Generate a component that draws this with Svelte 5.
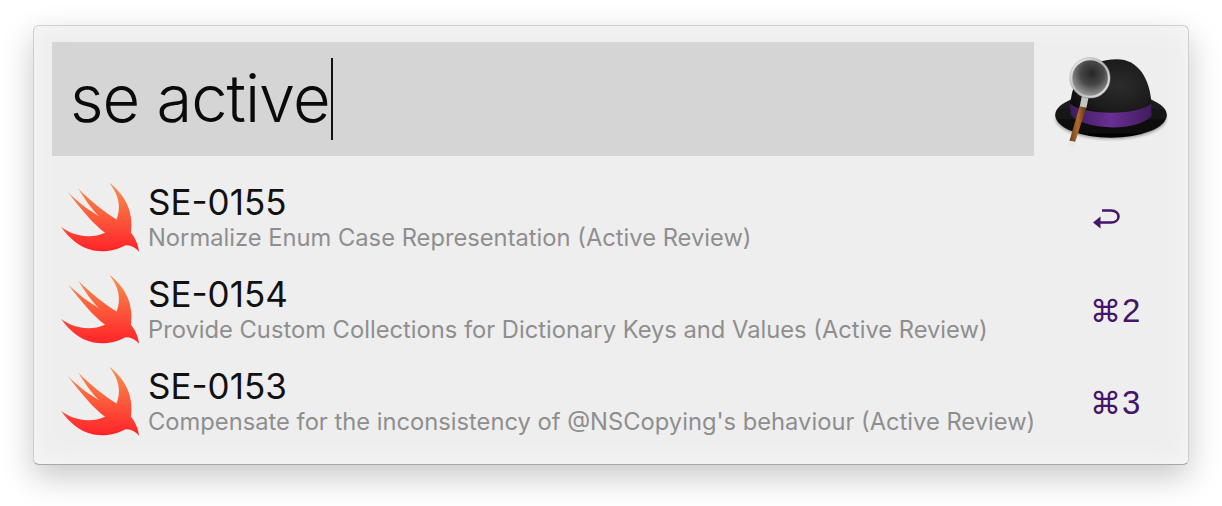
<script>
  const rows = [
    { id: 'SE-0155', sub: 'Normalize Enum Case Representation (Active Review)', key: '' },
    { id: 'SE-0154', sub: 'Provide Custom Collections for Dictionary Keys and Values (Active Review)', key: '2' },
    { id: 'SE-0153', sub: "Compensate for the inconsistency of @NSCopying's behaviour (Active Review)", key: '3' }
  ];
</script>

<div class="page">
  <div class="window">
    <div class="head">
      <div class="query"><span class="typed">se active</span><span class="caret"></span></div>
      <svg class="hat" viewBox="70 75 345 280" aria-hidden="true">
        <defs>
          <radialGradient id="crown" cx="0.6" cy="0.45" r="0.7">
            <stop offset="0" stop-color="#2c2c2c" /><stop offset="0.6" stop-color="#1c1c1c" /><stop offset="1" stop-color="#080808" />
          </radialGradient>
          <linearGradient id="brim" x1="0" y1="0" x2="0" y2="1">
            <stop offset="0" stop-color="#262626" /><stop offset="1" stop-color="#030303" />
          </linearGradient>
          <linearGradient id="band" x1="0" y1="0" x2="1" y2="0">
            <stop offset="0" stop-color="#3c1c58" /><stop offset="0.5" stop-color="#6a2f94" /><stop offset="1" stop-color="#3f1c5c" />
          </linearGradient>
          <radialGradient id="lens" cx="0.55" cy="0.38" r="0.62">
            <stop offset="0" stop-color="#262626" /><stop offset="0.5" stop-color="#484848" /><stop offset="1" stop-color="#a0a0a0" />
          </radialGradient>
          <linearGradient id="ring" x1="0" y1="0" x2="1" y2="1">
            <stop offset="0" stop-color="#f6f6f6" /><stop offset="0.5" stop-color="#b4b4b4" /><stop offset="1" stop-color="#ececec" />
          </linearGradient>
          <linearGradient id="handle" x1="0" y1="0" x2="1" y2="0">
            <stop offset="0" stop-color="#6e3f1a" /><stop offset="0.5" stop-color="#b06a2c" /><stop offset="1" stop-color="#5c3212" />
          </linearGradient>
          <filter id="soft"><feGaussianBlur stdDeviation="2" /></filter>
          <filter id="softer"><feGaussianBlur stdDeviation="5" /></filter>
        </defs>
        <ellipse cx="244" cy="266" rx="166" ry="62" fill="#000" opacity=".35" filter="url(#softer)" />
        <ellipse cx="244" cy="256" rx="168" ry="68" fill="url(#brim)" filter="url(#soft)" />
        <path d="M122 222 C126 150 170 88 262 88 C325 88 362 145 366 225 C340 272 160 282 122 222 Z" fill="url(#crown)" />
        <path d="M120 222 C170 258 320 258 365 222 L366 258 C330 304 170 306 123 256 Z" fill="url(#band)" />
        <path d="M150 228 L170 232 L136 337 L119 333 Z" fill="url(#handle)" />
        <path d="M156 200 L176 205 L170 234 L150 229 Z" fill="#c4c4c4" />
        <path d="M119 333 L136 337 L133 351 L116 347 Z" fill="#e8e8e8" />
        <circle cx="181" cy="144" r="57" fill="url(#lens)" stroke="url(#ring)" stroke-width="7" />
        <circle cx="181" cy="144" r="61" fill="none" stroke="#8a8a8a" stroke-width="1.2" />
      </svg>
    </div>
    <div class="list">
      {#each rows as row, i}
        <div class="row">
          <svg class="swift" viewBox="90 50 240 215" aria-hidden="true">
            <defs>
              <linearGradient id={'swift' + i} x1="0" y1="0" x2="0" y2="1">
                <stop offset="0" stop-color="#f8924e" /><stop offset="1" stop-color="#ff2229" />
              </linearGradient>
            </defs>
            <path fill={'url(#swift' + i + ')'} d="M238 55 C280 88 312 135 303 205 C315 220 325 240 327 262 C318 250 300 240 285 243 C250 262 215 262 190 258 C150 250 115 220 93 187 C130 215 180 225 225 205 C190 180 150 130 115 85 C150 118 180 140 207 155 C185 135 165 105 145 73 C180 108 225 145 260 165 C275 125 265 90 238 55 Z" />
          </svg>
          <div class="text">
            <div class="title">{row.id}</div>
            <div class="sub">{row.sub}</div>
          </div>
          <div class="key">
            {#if row.key}
              <span class="cmd">⌘</span>{row.key}
            {:else}
              <svg class="ret" viewBox="0 0 28 22" aria-hidden="true">
                <path d="M6 13.5 H18 C28 13.5 28 1.5 18 1.5 H9" fill="none" stroke="#45146b" stroke-width="2.6" />
                <path d="M0 13.5 L7.5 7.5 V19.5 Z" fill="#45146b" />
              </svg>
            {/if}
          </div>
        </div>
      {/each}
    </div>
  </div>
</div>

<style>
  :global(body) { margin: 0; background: #fff; }
  .page { width: 1222px; height: 506px; padding: 25px 33px 0; box-sizing: border-box; overflow: hidden; }
  .window {
    width: 1156px; height: 440px; box-sizing: border-box;
    background: #eee; border: 1px solid #cfcfcf; border-bottom-color: #a8a8a8; border-radius: 6px;
    box-shadow: 0 12px 32px rgba(0,0,0,.22), inset 0 0 26px #f7f7f7;
    padding: 16px 18px 0;
    font-family: Inter, sans-serif;
  }
  .head { display: flex; align-items: center; }
  .query {
    width: 982px; height: 114px; background: #d5d5d5; display: flex; align-items: center;
    padding-left: 18px; box-sizing: border-box;
  }
  .typed { font-weight: 300; font-size: 65px; color: #0a0a0a; letter-spacing: -1px; line-height: 114px; }
  .caret { width: 2px; height: 82px; background: #111; margin-left: 1px; }
  .hat { width: 115px; height: 93px; margin: 4px 0 0 19px; }
  .list { margin-top: 18px; margin-left: 8px; }
  .row { display: flex; align-items: center; height: 92px; }
  .swift { width: 80px; height: 72px; flex: none; margin-top: -7px; }
  .text { flex: 1; margin-left: 8px; margin-top: -11px; }
  .title { font-size: 35px; line-height: 46px; color: #111; }
  .sub { font-size: 23.72px; line-height: 26px; color: #8e8e8e; white-space: nowrap; }
  .key { width: 58px; margin: -3px 22px 0 0; color: #45146b; font-family: "Liberation Sans", sans-serif; font-size: 33px; white-space: nowrap; }
  .cmd { font-family: "DejaVu Sans", sans-serif; font-size: 31px; margin-right: 1px; }
  .ret { width: 28px; height: 22px; display: block; margin: 2px 0 0 3px; }
</style>
